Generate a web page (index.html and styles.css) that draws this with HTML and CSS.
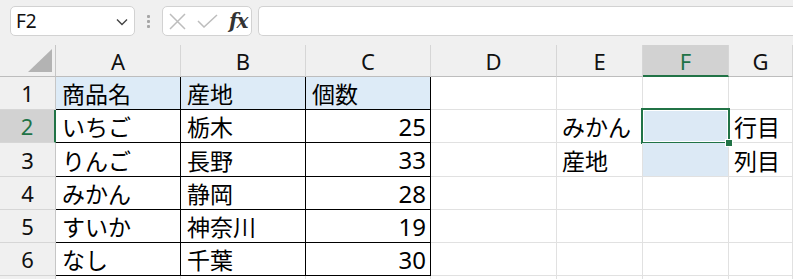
FILE: index.html
```html
<!DOCTYPE html>
<html lang="ja">
<head>
<meta charset="utf-8">
<link rel="stylesheet" href="styles.css">
</head>
<body>
<div class="toolbar">
  <div class="namebox">
    <span class="ref">F2</span>
    <svg class="chev" width="12" height="8" viewBox="0 0 12 8"><path d="M1 1.5 L6 6.5 L11 1.5" fill="none" stroke="#444" stroke-width="1.4"/></svg>
  </div>
  <div class="dots"><i></i><i></i><i></i></div>
  <div class="fbtns">
    <svg class="ico" width="17" height="17" viewBox="0 0 17 17"><path d="M1 1 L16 16 M16 1 L1 16" stroke="#bdbdbd" stroke-width="1.5" fill="none"/></svg>
    <svg class="ico" width="21" height="14" viewBox="0 0 21 14"><path d="M1 7 L7 13 L20 1" stroke="#bdbdbd" stroke-width="1.5" fill="none"/></svg>
    <span class="fx">fx</span>
  </div>
  <div class="formula"></div>
</div>
<div class="sheet">
  <div class="corner"><span class="tri"></span></div>
  <div class="ch">A</div><div class="ch">B</div><div class="ch">C</div><div class="ch">D</div><div class="ch">E</div><div class="ch sel">F</div><div class="ch">G</div>

  <div class="rh">1</div>
  <div class="c t hd">商品名</div><div class="c t hd">産地</div><div class="c t hd tr">個数</div><div class="c"></div><div class="c"></div><div class="c"></div><div class="c"></div>

  <div class="rh sel">2</div>
  <div class="c t">いちご</div><div class="c t">栃木</div><div class="c t tr num">25</div><div class="c"></div><div class="c">みかん</div><div class="c active"><span class="handle"></span></div><div class="c">行目</div>

  <div class="rh">3</div>
  <div class="c t">りんご</div><div class="c t">長野</div><div class="c t tr num">33</div><div class="c"></div><div class="c">産地</div><div class="c fill"></div><div class="c">列目</div>

  <div class="rh">4</div>
  <div class="c t">みかん</div><div class="c t">静岡</div><div class="c t tr num">28</div><div class="c"></div><div class="c"></div><div class="c"></div><div class="c"></div>

  <div class="rh">5</div>
  <div class="c t">すいか</div><div class="c t">神奈川</div><div class="c t tr num">19</div><div class="c"></div><div class="c"></div><div class="c"></div><div class="c"></div>

  <div class="rh">6</div>
  <div class="c t">なし</div><div class="c t">千葉</div><div class="c t tr num">30</div><div class="c"></div><div class="c"></div><div class="c"></div><div class="c"></div>

  <div class="rh"></div>
  <div class="c"></div><div class="c"></div><div class="c"></div><div class="c"></div><div class="c"></div><div class="c"></div><div class="c"></div>
</div>
</body>
</html>
```
FILE: styles.css
```css
html, body {
  margin: 0;
  padding: 0;
  background: #f0f0f0;
  overflow: hidden;
}
body {
  width: 793px;
  height: 279px;
  font-family: "Noto Sans CJK JP", "Noto Sans", sans-serif;
}
.toolbar {
  height: 45px;
  box-sizing: border-box;
  padding-top: 6px;
  display: flex;
  align-items: flex-start;
}
.namebox {
  margin-left: 10px;
  width: 125px;
  height: 30px;
  box-sizing: border-box;
  border: 1px solid #d2d2d2;
  border-radius: 5px;
  background: #fff;
  display: flex;
  align-items: center;
  justify-content: space-between;
  padding: 0 6px 0 5px;
}
.ref {
  font-family: "Noto Sans", sans-serif;
  font-size: 19px;
  color: #111;
  line-height: 1;
}
.chev { margin-top: 1px; }
.dots {
  width: 27px;
  height: 30px;
  display: flex;
  flex-direction: column;
  align-items: center;
  justify-content: center;
  gap: 2px;
}
.dots i {
  display: block;
  width: 3px;
  height: 3px;
  background: #a6a6a6;
  border-radius: 1px;
}
.fbtns {
  width: 90px;
  height: 30px;
  box-sizing: border-box;
  border: 1px solid #d2d2d2;
  border-radius: 5px;
  background: #fff;
  display: flex;
  align-items: center;
  padding-left: 6px;
  gap: 11px;
}
.fx {
  font-family: "DejaVu Serif", "Liberation Serif", serif;
  font-style: italic;
  font-weight: bold;
  font-size: 20px;
  color: #333;
  letter-spacing: -1px;
  line-height: 1;
}
.formula {
  margin-left: 6px;
  flex: 1;
  height: 30px;
  box-sizing: border-box;
  border: 1px solid #d2d2d2;
  border-right: none;
  border-radius: 5px 0 0 5px;
  background: #fff;
}
.sheet {
  display: grid;
  grid-template-columns: 56px 125px 125px 125px 126px 86px 86px 1fr;
  grid-template-rows: 32px 33px 33px 34px 33px 33px 33px 33px;
  background: #fff;
}
.sheet > div {
  box-sizing: border-box;
}
.corner {
  background: #f0f0f0;
  border-right: 1px solid #c6c6c6;
  border-bottom: 1px solid #bdbdbd;
  position: relative;
}
.tri {
  position: absolute;
  left: 28px;
  top: 4px;
  width: 0;
  height: 0;
  border-left: 24px solid transparent;
  border-bottom: 23px solid #b3b3b3;
}
.ch {
  background: #f0f0f0;
  border-right: 1px solid #d6d6d6;
  border-bottom: 1px solid #bdbdbd;
  display: flex;
  align-items: center;
  justify-content: center;
  font-family: "Noto Sans", sans-serif;
  font-size: 22px;
  color: #111;
  padding-top: 1px;
}
.ch.sel {
  background: #d2d2d2;
  border-bottom: 2px solid #217346;
  color: #217346;
}
.rh {
  background: #f0f0f0;
  border-right: 1px solid #c6c6c6;
  border-bottom: 1px solid #d6d6d6;
  display: flex;
  align-items: center;
  justify-content: center;
  font-family: "Noto Sans", sans-serif;
  font-size: 22px;
  color: #111;
}
.rh.sel {
  background: #d2d2d2;
  border-right: 2px solid #217346;
  color: #217346;
}
.c {
  border-right: 1px solid #e1e1e1;
  border-bottom: 1px solid #e1e1e1;
  display: flex;
  align-items: center;
  padding: 0 4px 0 5px;
  font-size: 23px;
  color: #000;
  white-space: nowrap;
  position: relative;
}
.c.t {
  border-right-color: #000;
  border-bottom-color: #000;
  padding-left: 6px;
}
.c.hd {
  background: #ddebf7;
}
.c.num {
  justify-content: flex-end;
  font-family: "Noto Sans", sans-serif;
  font-size: 24px;
}
.c.fill {
  background: #dce9f5;
}
.c.active {
  background: #dce9f5;
  box-shadow: inset 0 0 0 1px #fff;
}
.c.active::after {
  content: "";
  position: absolute;
  left: -2px;
  top: -2px;
  right: -2px;
  bottom: -2px;
  border: 2px solid #217346;
  pointer-events: none;
}
.handle {
  position: absolute;
  right: -5px;
  bottom: -5px;
  width: 6px;
  height: 6px;
  background: #217346;
  border: 1px solid #fff;
  z-index: 2;
}
```
